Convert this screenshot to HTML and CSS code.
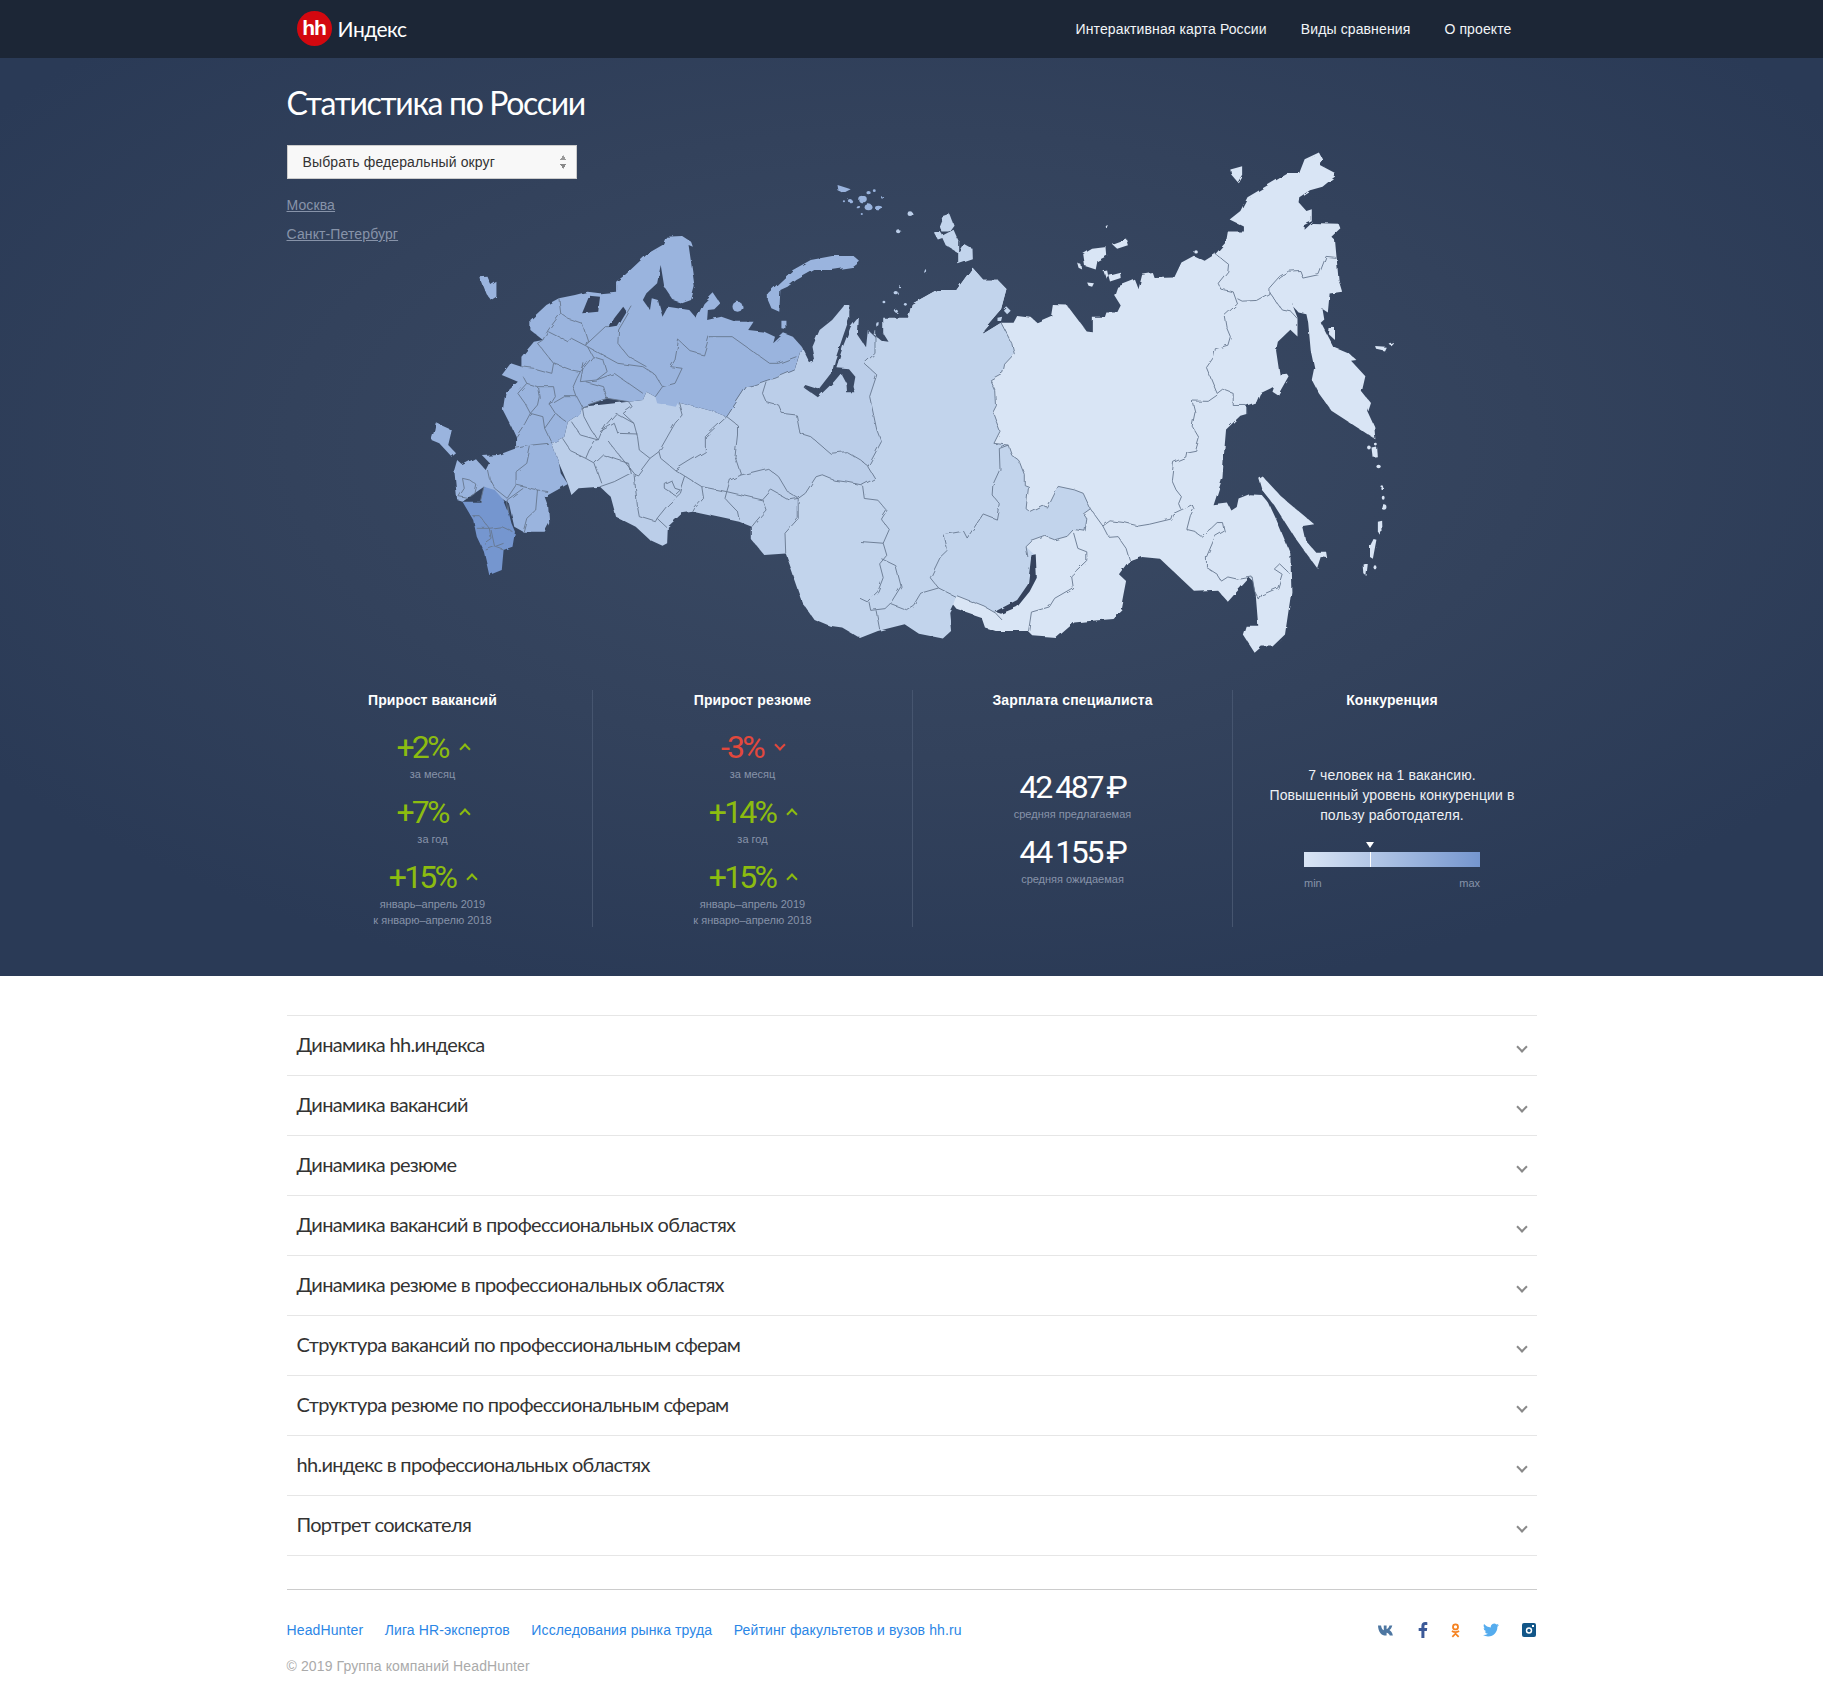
FILE: index.html
```html
<!DOCTYPE html>
<html lang="ru">
<head>
  <meta charset="UTF-8" />
  <title>Статистика по России</title>
  <link rel="stylesheet" href="styles.css">
</head>
<body>
  <header class="topbar">
    <div class="topbar-inner">
      <a class="logo" href="#"><span class="logo-hh">hh</span><span class="logo-text">Индекс</span></a>
      <nav class="topnav">
        <a href="#">Интерактивная карта России</a>
        <a href="#">Виды сравнения</a>
        <a href="#">О проекте</a>
      </nav>
    </div>
  </header>

  <section class="hero">
    <svg class="map" viewBox="0 58 1823 918" width="1823" height="918">
      <defs>
        <filter id="rough" x="0" y="0" width="100%" height="100%" filterUnits="objectBoundingBox">
          <feTurbulence type="fractalNoise" baseFrequency="0.09" numOctaves="2" seed="4"/>
          <feDisplacementMap in="SourceGraphic" scale="4"/>
        </filter>
      </defs>
      <g class="land">
      <!-- запад: координаты сняты с левой части карты -->
      <g transform="translate(400 130) scale(.35714 .33333)">
        <polygon class="r-mid" points="510,830 640,815 680,810 690,785 715,800 780,815 880,845 915,860 970,770 1030,750 1105,720 1125,650 1148,700 1162,690 1155,650 1175,600 1210,570 1245,525 1258,530 1258,565 1240,620 1218,690 1210,725 1172,778 1135,765 1130,772 1170,802 1215,755 1235,730 1250,760 1252,790 1275,790 1270,770 1275,740 1255,715 1222,712 1240,650 1262,590 1285,560 1282,615 1305,652 1310,600 1330,620 1400,700 1400,1300 1130,1425 1090,1270 1020,1275 985,1230 985,1190 950,1175 820,1145 790,1150 750,1190 748,1240 735,1247 700,1230 660,1190 605,1160 590,1100 560,1070 500,1075 480,1095 470,1062 445,1000 425,940 460,920 470,875 505,850"/>
        <polygon class="r-nw" points="695,370 735,345 745,320 790,318 815,335 820,350 808,345 825,470 815,510 790,520 765,510 740,470 730,405 720,460 690,490 680,510 700,540 705,505 722,510 735,560 750,530 810,540 830,565 850,520 878,490 897,520 880,538 862,540 860,570 900,560 940,575 990,575 975,600 1020,605 1050,620 1045,640 1075,610 1100,620 1125,650 1110,700 1105,720 1050,745 1030,750 990,765 970,770 915,860 880,845 780,815 772,830 720,820 715,800 690,785 680,810 640,815 580,805 510,830 505,850 470,875 460,920 425,940 445,1000 450,1030 470,1062 415,1095 405,1100 415,1130 418,1180 405,1205 345,1205 320,1190 305,1120 235,1070 175,1115 160,1110 152,1020 160,990 175,1005 210,985 240,1020 250,998 232,978 275,975 325,955 325,920 312,890 288,840 295,790 330,755 285,735 310,700 340,710 340,680 375,635 400,630 365,600 365,570 410,525 445,505 490,495 525,485 560,490 605,485 605,455 630,435"/>
        <polygon class="r-dark" points="175,1115 225,1115 235,1070 265,1080 290,1110 305,1150 312,1180 322,1205 315,1250 290,1260 285,1320 250,1335 235,1265 215,1220 205,1170"/>
        <polygon class="lake" points="530,497 560,500 555,545 510,550"/>
        <polygon class="lake" points="600,565 625,530 635,545 610,590 585,595"/>
        <polygon class="r-nw" points="1030,490 1075,445 1100,420 1150,390 1210,378 1270,378 1288,395 1270,410 1210,420 1160,420 1110,450 1085,470 1065,480 1062,545 1040,535 1030,510"/>
        <polygon class="r-nw" points="222,442 245,440 255,465 270,455 270,500 255,510 240,490"/>
        <polygon class="r-nw" points="100,878 145,900 135,945 157,970 145,980 110,940 88,930 95,905"/>
        <polygon class="r-nw" points="1068,572 1082,572 1082,598 1068,595"/>
        <ellipse class="r-nw" cx="945" cy="530" rx="14" ry="15"/>
        <polygon class="r-nw" points="1225,165 1245,172 1262,178 1240,190 1228,184"/>
        <ellipse class="r-nw" cx="1295" cy="207" rx="12" ry="10"/>
        <ellipse class="r-nw" cx="1312" cy="232" rx="11" ry="9"/>
        <ellipse class="r-nw" cx="1340" cy="234" rx="10" ry="7"/>
        <ellipse class="r-nw" cx="1260" cy="212" rx="6" ry="5"/>
        <ellipse class="r-nw" cx="1282" cy="230" rx="6" ry="5"/>
        <ellipse class="r-nw" cx="1312" cy="188" rx="6" ry="5"/>
        <ellipse class="r-nw" cx="1328" cy="182" rx="4" ry="4"/>
        <ellipse class="r-nw" cx="1350" cy="202" rx="3" ry="4"/>
        <ellipse class="r-nw" cx="1243" cy="214" rx="3" ry="3"/>
        <ellipse class="r-nw" cx="1293" cy="252" rx="3" ry="3"/>
        <ellipse class="r-mid" cx="1428" cy="251" rx="7" ry="7"/>
        <ellipse class="r-mid" cx="1395" cy="304" rx="6" ry="6"/>
        <ellipse class="r-mid" cx="1472" cy="425" rx="4" ry="5"/>
        <ellipse class="r-mid" cx="1388" cy="488" rx="6" ry="5"/>
        <ellipse class="r-mid" cx="1400" cy="472" rx="3" ry="3"/>
        <ellipse class="r-mid" cx="1355" cy="516" rx="4" ry="4"/>
        <ellipse class="r-mid" cx="1415" cy="523" rx="4" ry="4"/>
        <ellipse class="r-mid" cx="1390" cy="544" rx="4" ry="5"/>
        <ellipse class="r-mid" cx="1338" cy="584" rx="5" ry="7"/>
        <polygon class="r-mid" points="1243,525 1258,525 1258,542 1243,542"/>
        <g class="borders">
          <polyline points="1025,755 1015,790 1025,815 1060,825 1070,850 1110,855 1120,910 1150,920 1205,970 1250,965 1290,990 1312,1010"/>
          <polyline points="915,860 945,885 945,915 938,980 955,1035 1030,1015 1060,1040 1085,1085 1115,1105"/>
          <polyline points="915,860 855,920 855,965 815,990 770,1020 730,985 725,965 770,880 790,855 780,815"/>
          <polyline points="770,1020 800,1040 845,1070 915,1085 925,1050 955,1035"/>
          <polyline points="845,1070 850,1105 825,1135 820,1145"/>
          <polyline points="915,1085 910,1105 945,1145 950,1170"/>
          <polyline points="915,1085 1015,1110 1040,1080 1090,1110 1115,1105"/>
          <polyline points="1015,1110 1025,1140 1000,1170 985,1190"/>
          <polyline points="1095,1310 1180,1300 1205,1335 1265,1315 1300,1350 1295,1400"/>
          <polyline points="1115,1160 1180,1200 1245,1225 1250,1250 1310,1240 1350,1245 1365,1200"/>
          <polyline points="1265,1250 1268,1320"/>
          <polyline points="1350,1290 1390,1310 1405,1375 1350,1420"/>
          <polyline points="510,830 515,860 535,900 555,930 565,905 580,880 605,850 655,880 665,920 670,960 700,985 725,965"/>
          <polyline points="480,875 505,915 555,930"/>
          <polyline points="455,925 480,965 520,985 545,1000 570,975 610,990 640,1000 645,1030 600,1055 560,1070"/>
          <polyline points="545,1000 565,1060"/>
          <polyline points="520,985 530,960 550,930"/>
          <polyline points="560,905 600,880 610,910 665,912"/>
          <polyline points="580,930 625,990 655,1030 665,1035 700,985"/>
          <polyline points="655,1030 665,1130 670,1160 715,1175 720,1165 750,1125 785,1090 800,1040"/>
          <polyline points="740,1060 760,1050 770,1075 785,1080 770,1095 740,1075 740,1060"/>
          <polyline points="720,1165 745,1190"/>
          <polyline points="640,815 650,830 625,850 655,880"/>
          <polyline points="445,505 450,550 415,600 400,630 385,640 415,680 430,700 480,720 505,725 540,680 525,650 480,625 470,635 415,605"/>
          <polyline points="450,550 470,565 510,580 525,630 520,645 575,590 590,590"/>
          <polyline points="525,650 610,700 680,710 715,735 720,745"/>
          <polyline points="612,600 610,640 640,680 690,710"/>
          <polyline points="612,600 650,530"/>
          <polyline points="540,680 570,690 580,725 550,750 505,755 515,700"/>
          <polyline points="505,725 495,745 485,770 495,800 510,830"/>
          <polyline points="550,750 600,730 640,760 680,790"/>
          <polyline points="520,755 570,770 580,805"/>
          <polyline points="780,630 790,640 815,665 850,675 860,640 865,620 930,620 1035,700 1060,700 1110,680"/>
          <polyline points="1105,720 1050,745 1030,750 990,765 970,770 915,860"/>
          <polyline points="780,630 770,690 758,710 790,715 770,760 735,770 715,800"/>
          <polyline points="735,770 720,745"/>
          <polyline points="510,830 580,805 640,815"/>
          <polyline points="340,710 375,715 425,730 430,700"/>
          <polyline points="345,740 355,760 330,790 350,820 365,850 350,880 325,920"/>
          <polyline points="355,760 385,770 430,770 435,800 420,825 460,800 495,800"/>
          <polyline points="385,770 390,800 385,825 365,850 400,860 405,895 425,940"/>
          <polyline points="420,825 435,850 465,875"/>
          <polyline points="435,850 405,895"/>
          <polyline points="325,955 370,945 415,940"/>
          <polyline points="365,950 355,1000 325,1025 325,1065 300,1105 265,1075 250,1045 245,1020"/>
          <polyline points="325,1065 385,1080 415,1085"/>
          <polyline points="385,1080 380,1140 355,1165 345,1205"/>
          <polyline points="345,1075 300,1110 305,1150"/>
          <polyline points="175,1045 195,1050 215,1065 210,1090 190,1105 165,1100 180,1075 175,1045"/>
          <polyline points="205,1160 225,1160 250,1195 285,1190 315,1205"/>
          <polyline points="215,1195 250,1195 255,1225 235,1240"/>
          <polyline points="255,1200 265,1250 290,1260"/>
          <polyline points="240,1260 290,1240"/>
          <polyline points="225,1115 235,1070"/>
        </g>
      </g>
      <!-- восток: координаты сняты с правой части карты -->
      <g transform="translate(860 130) scale(.35714 .34435)">
        <polygon class="r-east" points="135,545 145,505 215,465 270,465 315,400 345,435 385,435 410,462 395,520 345,580 345,592 395,560 430,560 440,540 480,545 495,558 535,540 540,508 580,510 608,548 635,585 652,587 652,545 685,545 690,530 720,530 730,510 712,480 720,455 770,435 780,462 790,420 820,415 825,430 880,428 900,385 935,365 965,380 995,360 1025,325 1030,295 1075,295 1075,280 1035,260 1065,235 1085,195 1200,125 1230,125 1245,85 1285,65 1295,85 1285,100 1330,125 1330,135 1295,165 1260,175 1230,195 1228,210 1250,235 1265,230 1265,265 1245,275 1245,290 1265,270 1340,272 1345,285 1320,310 1330,320 1340,435 1350,470 1315,475 1310,530 1295,520 1300,550 1290,560 1325,630 1370,650 1390,668 1375,670 1415,715 1405,760 1428,790 1420,815 1440,860 1443,898 1320,815 1285,765 1265,725 1272,690 1262,640 1255,560 1250,535 1228,530 1210,510 1215,497 1232,490 1210,505 1225,545 1225,600 1205,580 1170,615 1165,640 1175,710 1195,708 1200,715 1170,770 1155,760 1160,745 1120,765 1110,790 1083,800 1082,825 1065,830 1025,870 1020,930 1015,1010 990,1090 1030,1085 1040,1105 1055,1095 1060,1070 1090,1058 1125,1060 1145,1085 1165,1130 1205,1230 1208,1340 1190,1465 1155,1500 1125,1500 1105,1518 1072,1465 1080,1440 1115,1440 1108,1350 1100,1310 1090,1300 1030,1370 1000,1335 935,1338 840,1245 790,1240 750,1255 725,1290 745,1310 730,1390 735,1395 710,1420 650,1425 600,1430 550,1475 485,1470 470,1455 380,1455 350,1445 340,1415 270,1390 200,1300"/>
        <polygon class="r-sib" points="35,590 60,612 80,615 65,590 65,545 135,545 145,505 215,465 270,465 315,400 345,435 385,435 410,462 395,520 345,580 345,592 395,560 425,620 432,650 405,680 400,705 365,725 380,760 382,800 372,820 392,875 375,910 415,915 425,945 445,960 460,1000 460,1030 472,1035 465,1100 475,1108 510,1090 525,1098 555,1035 600,1045 625,1055 645,1100 625,1115 635,1130 630,1165 598,1160 580,1180 545,1190 520,1180 480,1195 465,1210 490,1235 495,1300 475,1340 440,1385 380,1403 350,1385 270,1352 262,1375 250,1400 255,1455 232,1477 165,1463 125,1435 50,1455 0,1475 -50,1445 -85,1440 -130,1420 -158,1379 -208,1229 -210,1171 -173,1128 -173,1070 -153,1055 -123,1007 -108,1002 -73,1017 -38,1022 7,1031 42,1012 22,978 60,905 47,871 27,774 47,711 12,678 42,649 42,581"/>
        <polygon class="lake" points="380,1400 385,1395 440,1365 470,1320 480,1235 492,1232 495,1300 475,1340 440,1385 395,1405"/>
        <polygon class="r-east" points="1037,115 1070,105 1070,130 1058,152 1040,130"/>
        <polygon class="r-east" points="625,360 650,345 690,340 692,365 665,380 660,405 630,395"/>
        <polygon class="r-east" points="705,330 745,315 750,335 720,345"/>
        <polygon class="r-east" points="695,420 728,412 730,430 700,440"/>
        <polygon class="r-east" points="608,385 620,392 622,405 612,400"/>
        <polygon class="r-east" points="636,443 655,445 650,455 640,452"/>
        <polygon class="r-east" points="682,410 692,408 695,425 688,428"/>
        <ellipse class="r-east" cx="941" cy="354" rx="5" ry="5"/>
        <ellipse class="r-east" cx="692" cy="281" rx="4" ry="4"/>
        <polygon class="r-sib" points="222,275 232,250 250,243 262,275 248,295 228,295"/>
        <polygon class="r-sib" points="207,298 222,292 235,312 218,318"/>
        <polygon class="r-sib" points="228,308 262,290 275,320 275,357 240,335"/>
        <polygon class="r-sib" points="275,355 290,330 315,345 316,375 275,390"/>
        <polygon class="r-sib" points="412,515 422,525 412,535 403,525"/>
        <polygon class="r-sib" points="385,545 398,542 395,555 385,555"/>
        <polygon class="r-east" points="1115,1010 1125,1003 1180,1065 1272,1145 1240,1150 1250,1195 1275,1225 1305,1225 1308,1243 1290,1240 1280,1272 1250,1230 1215,1180 1160,1090 1125,1045"/>
        <polygon class="r-east" points="1312,575 1330,575 1330,610 1310,590"/>
        <polygon class="r-east" points="1445,630 1475,632 1470,643 1448,638"/>
        <polygon class="r-east" points="1480,620 1495,615 1485,625"/>
        <polygon class="r-east" points="1435,925 1448,922 1450,950 1438,952"/>
        <ellipse class="r-east" cx="1425" cy="922" rx="5" ry="6"/>
        <ellipse class="r-east" cx="1443" cy="912" rx="4" ry="4"/>
        <ellipse class="r-east" cx="1452" cy="977" rx="6" ry="5"/>
        <ellipse class="r-east" cx="1461" cy="1038" rx="4" ry="6"/>
        <ellipse class="r-east" cx="1465" cy="1068" rx="4" ry="6"/>
        <ellipse class="r-east" cx="1467" cy="1095" rx="7" ry="8"/>
        <polygon class="r-east" points="1450,1138 1462,1135 1463,1165 1455,1175 1450,1165"/>
        <polygon class="r-east" points="1438,1188 1446,1190 1436,1245 1428,1240 1428,1208"/>
        <polygon class="r-east" points="1410,1262 1422,1258 1418,1295 1412,1290"/>
        <ellipse class="r-east" cx="1442" cy="1270" rx="4" ry="6"/>
        <g class="borders">
          <polyline points="35,590 42,581 42,649 12,678 47,711 27,774 47,871 60,905 22,978 42,1012 7,1031 -38,1022 -73,1017 -108,1002 -123,1007 -153,1055 -173,1070 -173,1128 -210,1171 -208,1229"/>
          <polyline points="7,1031 12,1070 50,1075 75,1105 60,1130 82,1160 65,1200 0,1195"/>
          <polyline points="65,1200 75,1235 55,1260 65,1300 50,1340 20,1370 0,1360"/>
          <polyline points="60,1245 100,1265 115,1325 85,1375 70,1390 30,1395 25,1370"/>
          <polyline points="45,1395 55,1450"/>
          <polyline points="85,1375 130,1393 150,1380 170,1345 220,1330 268,1355"/>
          <polyline points="197,1300 220,1330"/>
          <polyline points="197,1300 225,1240 245,1220 235,1175 290,1165 300,1185 345,1115 382,1130 390,1085 370,1060 372,1030 392,985 390,925 415,915"/>
          <polyline points="395,560 425,620 432,650 405,680 400,705 365,725 380,760 382,800 372,820 392,875 375,910 415,915 425,945 445,960 460,1000 460,1030 472,1035 465,1100 475,1108 510,1090 525,1098 555,1035 600,1045 625,1055 645,1100 625,1115 635,1130 630,1165 598,1160 580,1180 545,1190 520,1180 480,1195 465,1210 470,1240"/>
          <polyline points="270,1352 350,1385 380,1403 395,1420"/>
          <polyline points="995,360 1032,390 1030,410 1003,445 1010,462 1045,470 1057,505 1020,540 1025,570 1037,600 1030,625 995,635 990,660 970,690 1000,765"/>
          <polyline points="1057,490 1070,497 1110,495 1145,475 1145,460 1175,425 1200,410 1232,408 1240,430 1285,420 1305,367 1332,370"/>
          <polyline points="1145,470 1180,520 1205,525 1225,548"/>
          <polyline points="1000,765 1015,753 1045,765 1045,800 1082,800 1083,825"/>
          <polyline points="1000,770 975,788 930,787 938,820 930,860 950,895 940,930 915,935 912,950 878,965 872,1015 885,1045 900,1065 892,1085 898,1100"/>
          <polyline points="645,1100 680,1150 700,1135 740,1140 780,1150 810,1145 870,1130 875,1115 930,1088 935,1100 925,1120 915,1160 935,1165 955,1180 985,1155 1000,1140 1015,1140 1020,1165 995,1180 970,1240 970,1270 1000,1290 1012,1310 1030,1298 1060,1305 1098,1298 1105,1340 1118,1365 1125,1350 1170,1330 1182,1290 1160,1275 1175,1260 1200,1285"/>
          <polyline points="680,1150 695,1180 720,1178 745,1215 755,1250"/>
          <polyline points="598,1170 610,1215 635,1225 635,1250 590,1295 595,1330 545,1360 530,1385 480,1400 472,1455"/>
        </g>
      </g>
      </g>
    </svg>

    <div class="hero-top">
      <h1 class="page-title">Статистика по России</h1>
      <div class="select-wrap">
        <select class="district">
          <option>Выбрать федеральный округ</option>
        </select>
        <span class="select-arrows"></span>
      </div>
      <a class="city" href="#">Москва</a>
      <a class="city" href="#">Санкт-Петербург</a>
    </div>

    <div class="stats">
      <div class="stat">
        <h3>Прирост вакансий</h3>
        <div class="metric">
          <div class="value up">+2%<i class="arrow"></i></div>
          <div class="note">за месяц</div>
        </div>
        <div class="metric">
          <div class="value up">+7%<i class="arrow"></i></div>
          <div class="note">за год</div>
        </div>
        <div class="metric">
          <div class="value up">+15%<i class="arrow"></i></div>
          <div class="note">январь–апрель 2019<br>к январю–апрелю 2018</div>
        </div>
      </div>
      <div class="stat">
        <h3>Прирост резюме</h3>
        <div class="metric">
          <div class="value down">-3%<i class="arrow"></i></div>
          <div class="note">за месяц</div>
        </div>
        <div class="metric">
          <div class="value up">+14%<i class="arrow"></i></div>
          <div class="note">за год</div>
        </div>
        <div class="metric">
          <div class="value up">+15%<i class="arrow"></i></div>
          <div class="note">январь–апрель 2019<br>к январю–апрелю 2018</div>
        </div>
      </div>
      <div class="stat">
        <h3>Зарплата специалиста</h3>
        <div class="salary">
          <div class="metric">
            <div class="value">42 487 ₽</div>
            <div class="note">средняя предлагаемая</div>
          </div>
          <div class="metric">
            <div class="value">44 155 ₽</div>
            <div class="note">средняя ожидаемая</div>
          </div>
        </div>
      </div>
      <div class="stat">
        <h3>Конкуренция</h3>
        <p class="compete">7 человек на 1 вакансию.<br>Повышенный уровень конкуренции в пользу работодателя.</p>
        <div class="scale">
          <div class="scale-bar"><span class="scale-mark" style="left: 37.5%"></span></div>
          <div class="scale-ends"><span>min</span><span>max</span></div>
        </div>
      </div>
    </div>
  </section>

  <main class="content">
    <ul class="accordion">
      <li>Динамика hh.индекса<i class="chevron"></i></li>
      <li>Динамика вакансий<i class="chevron"></i></li>
      <li>Динамика резюме<i class="chevron"></i></li>
      <li>Динамика вакансий в профессиональных областях<i class="chevron"></i></li>
      <li>Динамика резюме в профессиональных областях<i class="chevron"></i></li>
      <li>Структура вакансий по профессиональным сферам<i class="chevron"></i></li>
      <li>Структура резюме по профессиональным сферам<i class="chevron"></i></li>
      <li>hh.индекс в профессиональных областях<i class="chevron"></i></li>
      <li>Портрет соискателя<i class="chevron"></i></li>
    </ul>

    <footer class="footer">
      <div class="footer-row">
        <div class="footer-links">
          <a href="#">HeadHunter</a>
          <a href="#">Лига HR-экспертов</a>
          <a href="#">Исследования рынка труда</a>
          <a href="#">Рейтинг факультетов и вузов hh.ru</a>
        </div>
        <div class="social">
          <svg class="ico-vk" viewBox="0 0 20 12" width="17" height="11"><path d="M0 0h3.6c.3 3 1.8 5.3 3.2 5.8V0h3.3v4.4C11.400 4.200 12.800 2.300 13.500 0h3.300c-.5 2.700-2.200 4.700-3.400 5.500 1.300.7 3.300 2.500 4.100 6.500h-3.600c-.6-2-2-3.300-3.800-3.500V12H9.500C3.800 12 .3 7.500 0 0z"/></svg>
          <svg class="ico-fb" viewBox="0 0 10 17" width="10" height="16"><path d="M6.500 17V9.500h2.600l.4-3H6.500V4.700c0-.9.300-1.400 1.500-1.400h1.600V.300C9.300.200 8.400 0 7.300 0 5 0 3.300 1.500 3.300 4.200v2.300H.4v3h2.900V17z"/></svg>
          <svg class="ico-ok" viewBox="0 0 10 16" width="9" height="15">
            <circle cx="5" cy="4" r="2.800" fill="none" stroke-width="2"/>
            <path d="M1 8.500c2.500 1.600 5.500 1.600 8 0M5 10v1.500M1.500 15l3.500-3.500L8.500 15" fill="none" stroke-width="2"/>
          </svg>
          <svg class="ico-tw" viewBox="0 0 24 20" width="16" height="14"><path d="M23.950 2.570a10 10 0 01-2.820.78 4.960 4.960 0 002.160-2.730c-.95.560-2 .96-3.130 1.190a4.920 4.920 0 00-8.380 4.480C7.690 6.100 4.070 4.130 1.640 1.160a4.820 4.820 0 00-.67 2.480c0 1.710.87 3.210 2.190 4.090a4.900 4.900 0 01-2.230-.61v.06a4.920 4.920 0 003.950 4.820 5 5 0 01-2.210.09 4.940 4.940 0 004.600 3.410 9.870 9.870 0 01-6.100 2.110c-.39 0-.78-.03-1.170-.07a14 14 0 007.560 2.210c9.050 0 14-7.500 14-13.990 0-.21 0-.42-.02-.63a9.940 9.940 0 002.410-2.560z"/></svg>
          <svg class="ico-ig" viewBox="0 0 14 14" width="14" height="14">
            <rect width="14" height="14" rx="2"/>
            <circle cx="7" cy="7.500" r="3.200" fill="#fff"/>
            <circle cx="7" cy="7.500" r="1.700"/>
            <rect x="10" y="2" width="2" height="2" fill="#fff"/>
          </svg>
        </div>
      </div>
      <div class="copyright">© 2019 Группа компаний HeadHunter</div>
    </footer>
  </main>
</body>
</html>
```

FILE: styles.css
```css
* {
  box-sizing: border-box;
}
body {
  margin: 0;
  font-family: "Liberation Sans", Arial, sans-serif;
  font-size: 14px;
  letter-spacing: .12px;
  color: #333;
  background: #fff;
}
a {
  text-decoration: none;
}

.topbar {
  height: 58px;
  background: #1c2636;
}
.topbar-inner {
  width: 1250px;
  margin: 0 auto;
  height: 100%;
  display: flex;
  align-items: center;
  justify-content: space-between;
  padding: 0 25px 1px 10px;
}
.logo {
  display: flex;
  align-items: center;
  color: #fff;
}
.logo-hh {
  width: 35px;
  height: 35px;
  border-radius: 50%;
  background: #d3080f;
  color: #fff;
  font-size: 21px;
  font-weight: bold;
  letter-spacing: -1px;
  line-height: 33px;
  text-align: center;
}
.logo-text {
  margin-left: 6px;
  font-family: Lato, Roboto, sans-serif;
  font-size: 21px;
  letter-spacing: -.5px;
}
.topnav {
  display: flex;
  gap: 34px;
}
.topnav a {
  color: #f2f5f8;
}

.hero {
  position: relative;
  height: 918px;
  background: radial-gradient(ellipse 62% 62% at 50% 42%, #3b4b65 0%, #33425c 55%, #2a3a56 100%);
  overflow: hidden;
}
.map {
  position: absolute;
  left: 0;
  top: 0;
}
.map .land {
  filter: url(#rough);
}
.map .r-nw { fill: #9ab4de; }
.map .r-mid { fill: #bbcee9; }
.map .r-dark { fill: #7596cf; }
.map .r-sib { fill: #c2d4ec; }
.map .r-east { fill: #d9e5f5; }
.map .lake { fill: #34435c; }
.map .borders polyline {
  fill: none;
  stroke: #66778f;
  stroke-width: .9;
  vector-effect: non-scaling-stroke;
}

.hero-top {
  position: relative;
  width: 1250px;
  height: 632px;
  margin: 0 auto;
  padding-top: 25px;
}
.page-title {
  margin: 0 0 22px;
  font-family: Lato, Roboto, sans-serif;
  font-size: 32px;
  font-weight: 400;
  line-height: 40px;
  letter-spacing: -1.350px;
  color: #fff;
}
.select-wrap {
  position: relative;
  width: 290px;
  height: 34px;
  margin-bottom: 16px;
}
.district {
  width: 100%;
  height: 100%;
  padding: 0 0 0 15px;
  border: 1px solid #ccc;
  border-radius: 0;
  background: #f8f8f8;
  color: #333;
  font-family: inherit;
  font-size: 14px;
  letter-spacing: inherit;
  appearance: none;
}
.select-arrows {
  position: absolute;
  right: 10px;
  top: 10px;
  width: 7px;
  height: 14px;
  background:
    linear-gradient(to bottom right, transparent 50%, #999 50%) 0 0 / 3.500px 5px no-repeat,
    linear-gradient(to bottom left, transparent 50%, #999 50%) 3.500px 0 / 3.500px 5px no-repeat,
    linear-gradient(to top right, transparent 50%, #888 50%) 0 9px / 3.500px 5px no-repeat,
    linear-gradient(to top left, transparent 50%, #888 50%) 3.500px 9px / 3.500px 5px no-repeat;
}
.city {
  display: table;
  margin-bottom: 9px;
  line-height: 20px;
  color: #8793a9;
  text-decoration: underline;
}

.stats {
  position: relative;
  display: grid;
  grid-template-columns: repeat(4, 320px);
  width: 1280px;
  margin-left: calc(50% - 638.5px);
}
.stat {
  height: 237px;
  text-align: center;
  border-right: 1px solid #46556f;
}
.stat:last-child {
  border-right: 0;
  padding-right: 2px;
}
.stat h3 {
  margin: 0 0 18px;
  font-size: 14px;
  line-height: 20px;
  font-weight: bold;
  color: #fff;
}
.metric {
  margin-bottom: 11px;
}
.value {
  font-family: Roboto, sans-serif;
  font-size: 32px;
  font-weight: 400;
  line-height: 38px;
  letter-spacing: -2.800px;
  color: #fff;
}
.salary .value {
  letter-spacing: -2.400px;
  word-spacing: -1px;
}
.value.up {
  color: #8cbc10;
}
.value.down {
  color: #e2483c;
}
.arrow {
  display: inline-block;
  width: 8px;
  height: 8px;
  margin-left: 13px;
  border-style: solid;
  border-width: 2px 0 0 2px;
  transform: translateY(-5px) rotate(45deg);
}
.down .arrow {
  transform: translateY(-9px) rotate(225deg);
}
.note {
  font-size: 11px;
  line-height: 16px;
  letter-spacing: 0;
  color: #8793a9;
}
.salary {
  padding-top: 40px;
}
.compete {
  margin: 55px auto 0;
  width: 250px;
  line-height: 20px;
  color: #eef1f5;
}
.scale {
  width: 176px;
  margin: 27px auto 0;
}
.scale-bar {
  position: relative;
  height: 15px;
  background: linear-gradient(to right, #d9e5f5, #7596cf);
}
.scale-mark {
  position: absolute;
  top: 0;
  width: 1px;
  height: 15px;
  background: #fff;
}
.scale-mark::before {
  content: "";
  position: absolute;
  left: -4px;
  top: -10px;
  border-style: solid;
  border-width: 6px 4px 0;
  border-color: #fff transparent transparent;
}
.scale-ends {
  display: flex;
  justify-content: space-between;
  margin-top: 8px;
  font-size: 11px;
  line-height: 16px;
  letter-spacing: 0;
  color: #8793a9;
}

.content {
  width: 1250px;
  margin: 0 auto;
  padding: 39px 0 30px;
}
.accordion {
  margin: 0;
  padding: 1px 0 0;
  list-style: none;
}
.accordion li {
  display: flex;
  align-items: center;
  justify-content: space-between;
  height: 61px;
  padding: 0 11px 3px 10px;
  margin-top: -1px;
  border-top: 1px solid #e6e6e6;
  border-bottom: 1px solid #e6e6e6;
  font-family: Lato, Roboto, sans-serif;
  font-size: 20px;
  letter-spacing: -.7px;
  color: #333;
}
.chevron {
  width: 8px;
  height: 8px;
  margin-top: 5px;
  border-style: solid;
  border-color: #8a8a8a;
  border-width: 0 2px 2px 0;
  transform: rotate(45deg);
}

.footer {
  margin-top: 33px;
  padding-top: 30px;
  border-top: 1px solid #ccc;
}
.footer-row {
  display: flex;
  justify-content: space-between;
  align-items: center;
  height: 20px;
}
.footer-links {
  display: flex;
  gap: 21.500px;
}
.footer-links a {
  color: #2b86e6;
}
.social {
  display: flex;
  align-items: center;
  gap: 23px;
  padding-right: 1px;
}
.ico-vk { fill: #4d76a1; }
.ico-fb { fill: #3b5998; }
.ico-ok { stroke: #f58220; }
.ico-tw { fill: #55acee; }
.ico-ig { fill: #125688; }
.copyright {
  margin-top: 16px;
  line-height: 20px;
  color: #aaa;
}
```
